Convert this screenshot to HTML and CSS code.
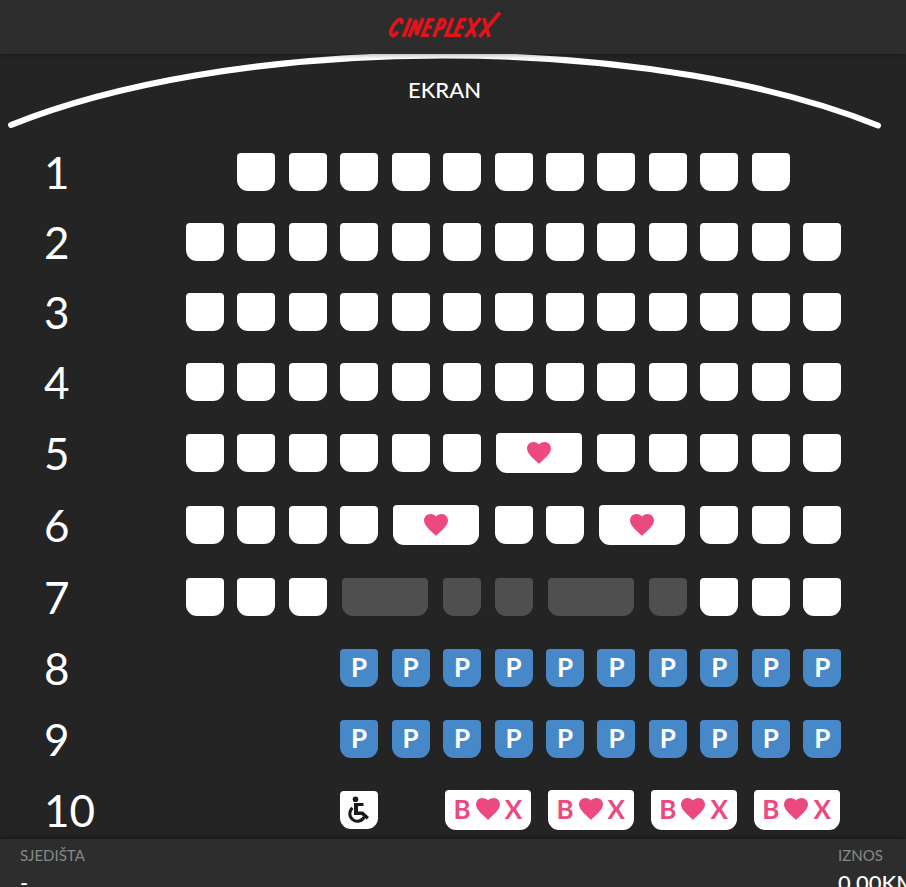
FILE: index.html
```html
<!DOCTYPE html>
<html lang="bs">
<head>
<meta charset="utf-8">
<meta name="viewport" content="width=device-width, initial-scale=1">
<title>Cineplexx</title>
<link rel="stylesheet" href="styles.css">
</head>
<body>
<svg class="defs" aria-hidden="true">
  <symbol id="heart" viewBox="0 0 24 22"><path d="M12 22C9 18.600 0 12.500 0 6.600C0 2.800 2.900 0 6.400 0C8.700 0 10.900 1 12 2.600C13.100 1 15.300 0 17.600 0C21.100 0 24 2.800 24 6.600C24 12.500 15 18.600 12 22Z"/></symbol>
  <symbol id="wheelchair" viewBox="0 0 22 28"><circle cx="7.500" cy="3.200" r="2.800"/><path d="M6 7h9.500v3H10v5.500h5l6 5.500-2.400 2.600-5.100-4.600H6z"/><path class="wheel" d="M4.500 11.800A7.600 7.600 0 1 0 16.200 21"/></symbol>
</svg>
<header class="header">
  <a class="logo" href="#" aria-label="Cineplexx">
    <svg class="logo-art" viewBox="0 0 114 28" aria-hidden="true">
      <g class="logo-strokes">
        <path d="M13 14C15.500 9.500 12.500 7.500 8.500 11.500C4 16 1.500 22.500 3.500 25C5 26.500 8 24.500 9.500 21.500"/>
        <path d="M23 8L15.500 27"/>
        <path d="M21 27L28 10L28.500 25L35 8"/>
        <path d="M46.500 9.800H41L34.800 25.200H41M38 17H44"/>
        <path d="M46 27L52.500 9.800H55C59.500 10 56 18.500 52 18.500H49.500"/>
        <path d="M65 8L58.200 25.200H65"/>
        <path d="M78.500 9.800H73L66.800 25.200H73M70 17H76"/>
        <path d="M82 8L87 27M92.500 8L77.500 27"/>
        <path d="M96 8L101 27M112 2.500L91.500 27"/>
      </g>
    </svg>
  </a>
</header>
<main class="hall">
  <div class="screen">
    <svg class="screen-curve" viewBox="0 0 889 83" aria-hidden="true"><path d="M11 71A580 208 0 0 1 878 71.500"/></svg>
    <h1 class="screen-label">EKRAN</h1>
  </div>
  <div class="rows" id="rows"></div>
</main>
<footer class="summary">
  <dl class="summary-item"><dt>SJEDIŠTA</dt><dd>-</dd></dl>
  <dl class="summary-item summary-total"><dt>IZNOS</dt><dd>0.00KM</dd></dl>
</footer>
<script src="seats.js"></script>
</body>
</html>
```
FILE: seats.js
```js
// s seat, L love seat, x taken, X taken double, P premium, W wheelchair, B box, _ gap
const plan = [
  ["_sssssssssss_", ""],
  ["sssssssssssss", ""],
  ["sssssssssssss", ""],
  ["sssssssssssss", ""],
  ["ssssssLsssss", "row-love"],
  ["ssssLssLsss", "row-love"],
  ["sssXxxXxsss", "row-back"],
  ["___PPPPPPPPPP", "row-back"],
  ["___PPPPPPPPPP", "row-back"],
  ["___W_BBBB", "row-back"]
];
const heart = '<svg class="heart" aria-hidden="true"><use href="#heart"/></svg>';
const kinds = {
  s: ["", "", "sjedište"],
  L: ["double", heart, "ljubavno sjedište"],
  x: ["taken", "", "zauzeto"],
  X: ["double taken", "", "zauzeto"],
  P: ["premium", "P", "premium"],
  W: ["", '<svg class="wheelchair" aria-hidden="true"><use href="#wheelchair"/></svg>', "invalidska kolica"],
  B: ["double box", "<span>B</span>" + heart + "<span>X</span>", "box"]
};
document.getElementById("rows").innerHTML = plan.map(([cells, rowClass], i) => {
  const seats = [...cells].map((c, n) => {
    if (c === "_") return "<span></span>";
    const [cls, content, label] = kinds[c];
    const off = cls.includes("taken") ? " disabled" : "";
    return `<button type="button" class="seat ${cls}" aria-label="Red ${i + 1}, ${n + 1}, ${label}"${off}>${content}</button>`;
  }).join("");
  return `<section class="row ${rowClass}"><h2 class="row-number">${i + 1}</h2><div class="seats">${seats}</div></section>`;
}).join("");
```
FILE: styles.css
```css
* { box-sizing: border-box; }

body {
  margin: 0;
  height: 100vh;
  display: flex;
  flex-direction: column;
  background: #242424;
  color: #fff;
  font-family: Lato, "Liberation Sans", sans-serif;
}

.defs { position: absolute; width: 0; height: 0; }

.header {
  flex: none;
  height: 54px;
  padding: 10px 17px 0 0;
  display: flex;
  justify-content: center;
  align-items: flex-start;
  background: #2d2d2d;
  box-shadow: 0 1px 5px rgba(0, 0, 0, 0.35);
  z-index: 1;
}

.logo { display: block; }
.logo-art { display: block; width: 114px; height: 28px; }
.logo-strokes { fill: none; stroke: #e1141b; stroke-width: 3.6; }

.hall {
  flex: 1;
  min-height: 0;
  padding-right: 17px;
  overflow: auto;
  scrollbar-width: none;
}

.screen { display: grid; }
.screen > * { grid-area: 1 / 1; }
.screen-curve { display: block; width: 100%; }
.screen-curve path {
  fill: none;
  stroke: #fff;
  stroke-width: 6;
  stroke-linecap: round;
}
.screen-label {
  margin: 23px 0 0;
  text-align: center;
  font-size: 22px;
  line-height: 26px;
  font-weight: 500;
}

.row {
  display: flex;
  align-items: center;
  height: 70px;
  padding: 0 41px 0 44px;
}
.row-love { height: 72px; }
.row-back { height: 71px; }

.row-number {
  flex: 1;
  margin: 0;
  font-size: 44px;
  line-height: 52px;
  font-weight: 400;
}

.seats {
  width: 83.2%;
  display: grid;
  grid-template-columns: repeat(13, 1fr);
  justify-items: center;
  align-items: center;
}

.seat {
  width: 38px;
  height: 38px;
  padding: 0;
  display: flex;
  align-items: center;
  justify-content: center;
  border: 0;
  border-radius: 4px 4px 11px 11px;
  background: #fff;
  color: #ec4980;
  font: 700 26px/32px Lato, "Liberation Sans", sans-serif;
  cursor: pointer;
}
.double { grid-column: span 2; width: 86px; height: 40px; }
.taken { height: 38px; background: #4f4f4f; cursor: default; }
.premium { background: #4788c8; color: #fff; }
.box { gap: 5px; }
.premium, .box { padding-bottom: 2px; }

.heart { width: 24px; height: 22px; fill: #ec4980; }
.wheelchair { width: 22px; height: 28px; fill: #1a1a1a; }
.wheel { fill: none; stroke: #1a1a1a; stroke-width: 3; }

.summary {
  flex: none;
  height: 48px;
  padding: 7px 20px 0;
  display: flex;
  justify-content: space-between;
  overflow: hidden;
  background: #2d2d2d;
  box-shadow: 0 -1px 5px rgba(0, 0, 0, 0.35);
  z-index: 1;
}
.summary-item { margin: 0; }
.summary-total { width: 48px; }
.summary dt {
  color: #888;
  font-size: 15px;
  line-height: 18px;
}
.summary dd {
  margin: 5px 0 0;
  font-size: 22px;
  line-height: 28px;
  font-weight: 500;
  white-space: nowrap;
}
```
